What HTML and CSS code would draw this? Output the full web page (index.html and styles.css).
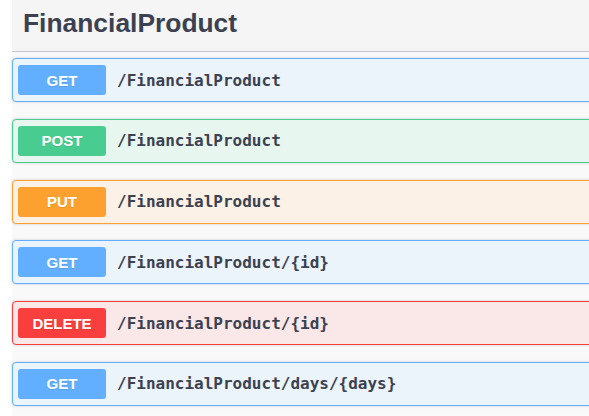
FILE: index.html
```html
<!DOCTYPE html>
<html>
<head>
<meta charset="utf-8">
<link rel="stylesheet" href="styles.css">
</head>
<body>
<div class="wrap">
  <h4 class="tag">FinancialProduct</h4>
  <div class="ops">
    <div class="op get"><span class="method">GET</span><span class="path">/FinancialProduct</span></div>
    <div class="op post"><span class="method">POST</span><span class="path">/FinancialProduct</span></div>
    <div class="op put"><span class="method">PUT</span><span class="path">/FinancialProduct</span></div>
    <div class="op get"><span class="method">GET</span><span class="path">/FinancialProduct/{id}</span></div>
    <div class="op delete"><span class="method">DELETE</span><span class="path">/FinancialProduct/{id}</span></div>
    <div class="op get"><span class="method">GET</span><span class="path">/FinancialProduct/days/{days}</span></div>
  </div>
</div>
</body>
</html>
```

FILE: styles.css
```css
html, body {
  margin: 0;
  padding: 0;
  background: #ffffff;
  overflow: hidden;
}
.wrap {
  margin-left: 12px;
  width: 600px;
  background: #f9f9f9;
  min-height: 416px;
}
.tag {
  margin: 0;
  height: 52px;
  box-sizing: border-box;
  padding: 8px 0 0 11px;
  font-family: "Liberation Sans", Arial, sans-serif;
  font-weight: bold;
  font-size: 26.4px;
  line-height: 30px;
  color: #3b4151;
  background: #f5f5f5;
  border-bottom: 1px solid #c4c6cc;
}
.ops {
  padding-top: 6px;
  display: flex;
  flex-direction: column;
  gap: 16.8px;
}
.op {
  height: 44px;
  box-sizing: border-box;
  border: 1px solid;
  border-radius: 4px;
  box-shadow: 0 0 3px rgba(0,0,0,.19);
  display: flex;
  align-items: center;
  padding: 0 5px;
}
.method {
  width: 88px;
  height: 30px;
  border-radius: 3px;
  display: flex;
  align-items: center;
  justify-content: center;
  font-family: "Liberation Sans", Arial, sans-serif;
  font-weight: bold;
  font-size: 15px;
  color: #fff;
  text-shadow: 0 1px 0 rgba(0,0,0,.1);
}
.path {
  margin-left: 11px;
  font-family: "DejaVu Sans Mono", monospace;
  font-weight: bold;
  font-size: 16px;
  color: #3b4151;
}
.get { background: #ebf3fb; border-color: #61affe; }
.get .method { background: #61affe; }
.post { background: #e8f6f0; border-color: #49cc90; }
.post .method { background: #49cc90; }
.put { background: #fbf1e6; border-color: #fca130; }
.put .method { background: #fca130; }
.delete { background: #fae7e7; border-color: #f93e3e; }
.delete .method { background: #f93e3e; }
```
